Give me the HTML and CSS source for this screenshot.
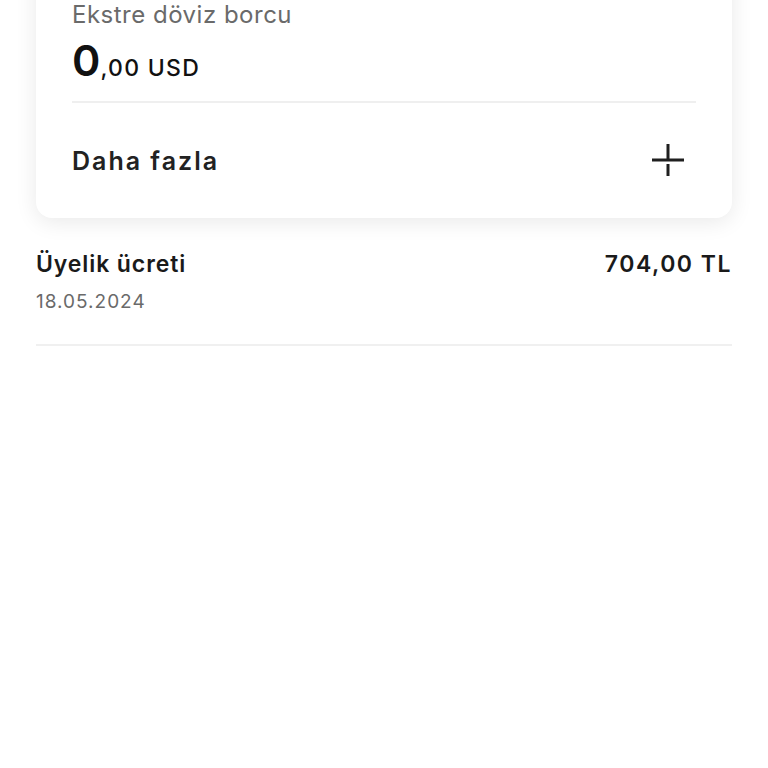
FILE: index.html
```html
<!doctype html>
<html lang="tr">
<head>
    <meta charset="UTF-8">
    <meta name="viewport" content="width=device-width, initial-scale=1.0">
    <title>Ekstre</title>
    <link rel="stylesheet" href="styles.css">
</head>
<body>
    <div class="page">
        <!-- card -->
        <div class="card">
            <div class="debt">
                <div class="debt-label">Ekstre döviz borcu</div>
                <div class="debt-amount"><span class="big">0</span>,00 USD</div>
            </div>
            <div class="more">
                <span class="more-text">Daha fazla</span>
                <svg class="more-icon" width="32" height="34" viewBox="0 0 32 34">
                    <path d="M0 16H32M16 0V14.5M16 20V32" stroke="#1f1f1f" stroke-width="3" fill="none"/>
                </svg>
            </div>
        </div>
        <!-- list -->
        <div class="item">
            <div class="item-top">
                <span class="item-title">Üyelik ücreti</span>
                <span class="item-price">704,00 TL</span>
            </div>
            <div class="item-date">18.05.2024</div>
        </div>
    </div>
</body>
</html>
```

FILE: styles.css
```css
* {
    margin: 0;
    padding: 0;
    box-sizing: border-box;
}
body {
    background: #fff;
    font-family: Inter, "Noto Sans", sans-serif;
    color: #1f1f1f;
}
.page {
    padding: 0 36px;
}

/* card */
.card {
    margin-top: -40px;
    padding: 40px 36px 0;
    background: #fff;
    border-radius: 16px;
    box-shadow: 0 4px 22px rgba(0, 0, 0, 0.09);
}
.card .debt {
    padding-bottom: 19px;
    border-bottom: 2px solid #efefef;
}
.card .debt-label {
    font-size: 24px;
    line-height: 30px;
    letter-spacing: 0.5px;
    color: #6a6a6a;
}
.card .debt-amount {
    display: flex;
    align-items: baseline;
    height: 44px;
    margin-top: 8px;
    font-size: 23px;
    font-weight: 500;
    letter-spacing: 1.3px;
    color: #111;
}
.card .debt-amount .big {
    font-size: 43px;
    font-weight: 600;
    line-height: 44px;
    letter-spacing: 0;
}
.card .more {
    display: flex;
    align-items: center;
    justify-content: space-between;
    height: 115px;
    padding-right: 12px;
}
.card .more-text {
    font-size: 25px;
    font-weight: 600;
    letter-spacing: 2px;
    color: #222;
}

/* list */
.item {
    padding: 31px 0 30px;
    border-bottom: 2px solid #f0f0f0;
}
.item .item-top {
    display: flex;
    justify-content: space-between;
    font-size: 23px;
    font-weight: 600;
    line-height: 30px;
    letter-spacing: 0.9px;
    color: #1a1a1a;
}
.item .item-price {
    letter-spacing: 1.5px;
}
.item .item-date {
    margin-top: 11px;
    font-size: 19px;
    line-height: 24px;
    letter-spacing: 1px;
    color: #6a6a6a;
}
```
